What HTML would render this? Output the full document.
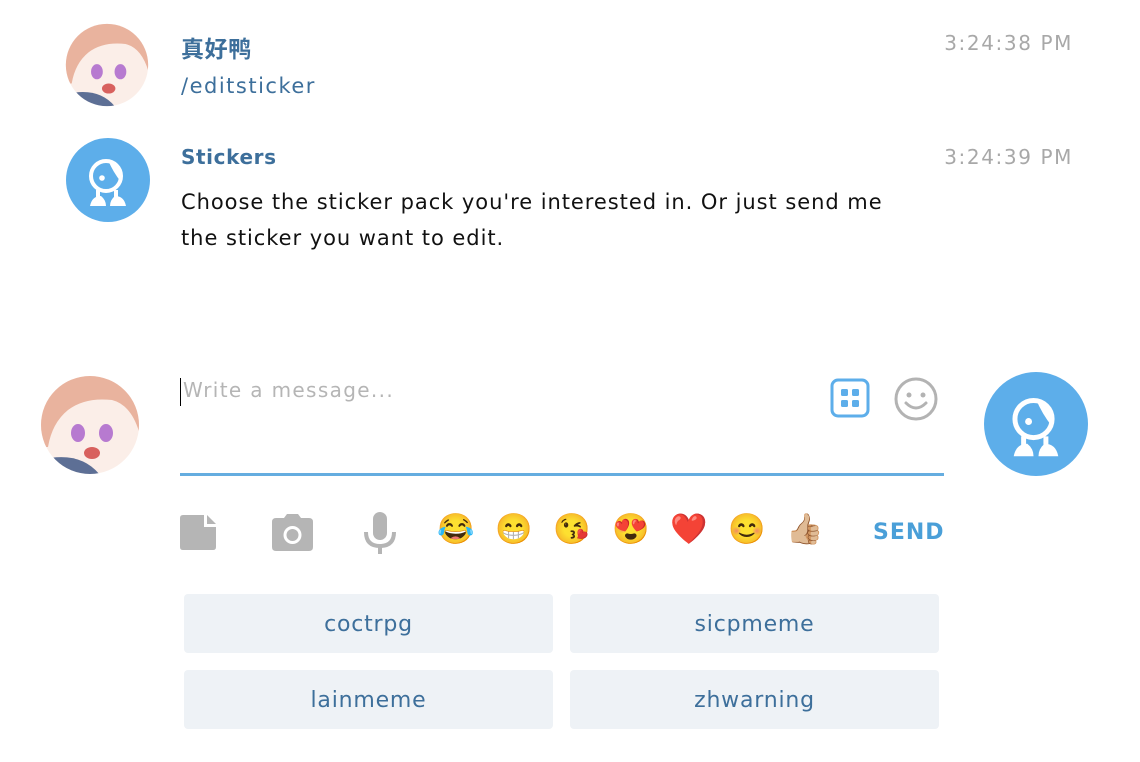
<!DOCTYPE html><html><head><meta charset="utf-8"><style>
body{margin:0;width:1140px;height:762px;background:#fff;font-family:"DejaVu Sans","Noto Sans CJK SC",sans-serif;position:relative;overflow:hidden}
.a{position:absolute}
.name{color:#3d6f9b;font-weight:bold;font-size:20px;letter-spacing:0.6px}
.time{color:#a8a8a8;font-size:20px;right:67px;letter-spacing:1.6px}
.msg{font-size:21px;color:#111;line-height:36px;letter-spacing:0.95px}
.btn{position:absolute;background:#eef2f6;border-radius:4px;color:#3d6f9b;font-size:22px;letter-spacing:0.8px;text-align:center;line-height:62px;width:369px;height:59px}
.emo{position:absolute;top:512px;font-size:30px;font-family:"Noto Color Emoji","DejaVu Sans",sans-serif}
</style></head><body>
<svg class="a" style="left:65px;top:22px" width="84" height="86" viewBox="0 0 100 100"><defs><clipPath id="c1"><circle cx="50" cy="50" r="49"/></clipPath></defs><g clip-path="url(#c1)"><rect width="100" height="100" fill="#fbeee8"/><path d="M0 0H100V60Q92 30 72 25Q45 22 28 35Q12 48 8 72L0 72Z" fill="#e9b39e"/><ellipse cx="38" cy="58" rx="7" ry="9" fill="#b77ad0"/><ellipse cx="66" cy="58" rx="7" ry="9" fill="#b77ad0"/><ellipse cx="52" cy="78" rx="8" ry="6" fill="#d8615e"/><path d="M0 85Q40 75 60 100H0Z" fill="#5d6f95"/></g></svg>
<div class="a name" style="left:181px;top:30px;font-size:23px">真好鸭</div>
<div class="a" style="left:181px;top:74px;font-size:21px;letter-spacing:1.5px;color:#3d6f9b">/editsticker</div>
<div class="a time" style="top:31px">3:24:38 PM</div>
<svg class="a" style="left:66px;top:138px" width="84" height="84" viewBox="0 0 84 84"><circle cx="42" cy="42" r="42" fill="#5daeea"/><circle cx="40" cy="38" r="15" fill="none" stroke="#fff" stroke-width="4"/><path d="M42 22Q58 28 55 44Q47 34 42 22Z" fill="#fff"/><circle cx="36" cy="40" r="2.8" fill="#fff"/><path d="M32 52V60M50 52V60" stroke="#fff" stroke-width="4"/><path d="M24 68Q26 58 35 58Q40 62 40 68ZM60 68Q58 58 49 58Q44 62 44 68Z" fill="#fff"/></svg>
<div class="a name" style="left:181px;top:145px">Stickers</div>
<div class="a time" style="top:145px">3:24:39 PM</div>
<div class="a msg" style="left:181px;top:184px">Choose the sticker pack you're interested in. Or just send me<br>the sticker you want to edit.</div>
<svg class="a" style="left:40px;top:375px" width="100" height="100" viewBox="0 0 100 100"><defs><clipPath id="c2"><circle cx="50" cy="50" r="49"/></clipPath></defs><g clip-path="url(#c2)"><rect width="100" height="100" fill="#fbeee8"/><path d="M0 0H100V60Q92 30 72 25Q45 22 28 35Q12 48 8 72L0 72Z" fill="#e9b39e"/><ellipse cx="38" cy="58" rx="7" ry="9" fill="#b77ad0"/><ellipse cx="66" cy="58" rx="7" ry="9" fill="#b77ad0"/><ellipse cx="52" cy="78" rx="8" ry="6" fill="#d8615e"/><path d="M0 85Q40 75 60 100H0Z" fill="#5d6f95"/></g></svg>
<div class="a" style="left:180px;top:378px;width:1px;height:28px;background:#000"></div>
<div class="a" style="left:183px;top:378px;font-size:20px;letter-spacing:1.35px;color:#b5b5b5">Write a message...</div>
<svg class="a" style="left:830px;top:378px" width="40" height="40" viewBox="0 0 40 40"><rect x="2" y="2" width="36" height="36" rx="6" fill="none" stroke="#5daeea" stroke-width="3"/><rect x="11" y="11" width="7" height="7" rx="1.5" fill="#5daeea"/><rect x="22" y="11" width="7" height="7" rx="1.5" fill="#5daeea"/><rect x="11" y="22" width="7" height="7" rx="1.5" fill="#5daeea"/><rect x="22" y="22" width="7" height="7" rx="1.5" fill="#5daeea"/></svg>
<svg class="a" style="left:893px;top:376px" width="46" height="46" viewBox="0 0 46 46"><circle cx="23" cy="23" r="20" fill="none" stroke="#b3b3b3" stroke-width="3"/><circle cx="16" cy="19" r="2.5" fill="#b3b3b3"/><circle cx="30" cy="19" r="2.5" fill="#b3b3b3"/><path d="M13 27Q23 37 33 27" fill="none" stroke="#b3b3b3" stroke-width="3" stroke-linecap="round"/></svg>
<svg class="a" style="left:984px;top:372px" width="104" height="104" viewBox="0 0 84 84"><circle cx="42" cy="42" r="42" fill="#5daeea"/><circle cx="40" cy="38" r="15" fill="none" stroke="#fff" stroke-width="4"/><path d="M42 22Q58 28 55 44Q47 34 42 22Z" fill="#fff"/><circle cx="36" cy="40" r="2.8" fill="#fff"/><path d="M32 52V60M50 52V60" stroke="#fff" stroke-width="4"/><path d="M24 68Q26 58 35 58Q40 62 40 68ZM60 68Q58 58 49 58Q44 62 44 68Z" fill="#fff"/></svg>
<div class="a" style="left:180px;top:473px;width:764px;height:3px;background:#65ade0"></div>
<svg class="a" style="left:180px;top:515px" width="37" height="35" viewBox="0 0 37 35"><path d="M3 0H24V12H36V32Q36 35 33 35H3Q0 35 0 32V3Q0 0 3 0Z" fill="#b5b5b5"/><path d="M27 0L36 9H27Z" fill="#b5b5b5"/></svg>
<svg class="a" style="left:272px;top:514px" width="41" height="37" viewBox="0 0 41 37"><path d="M12 4L15 0H26L29 4H37Q41 4 41 8V33Q41 37 37 37H4Q0 37 0 33V8Q0 4 4 4Z" fill="#b5b5b5"/><circle cx="20.5" cy="21" r="9" fill="#fff"/><circle cx="20.5" cy="21" r="6" fill="#b5b5b5"/></svg>
<svg class="a" style="left:362px;top:512px" width="36" height="42" viewBox="0 0 36 42"><rect x="11" y="0" width="14" height="28" rx="7" fill="#b5b5b5"/><path d="M4 20Q4 34 18 34Q32 34 32 20" fill="none" stroke="#b5b5b5" stroke-width="4"/><rect x="16" y="33" width="4" height="9" fill="#b5b5b5"/></svg>
<div class="emo" style="left:437px">😂</div><div class="emo" style="left:495px">😁</div><div class="emo" style="left:553px">😘</div><div class="emo" style="left:612px">😍</div><div class="emo" style="left:670px">❤️</div><div class="emo" style="left:728px">😊</div><div class="emo" style="left:786px">👍🏼</div>
<div class="a" style="left:873px;top:520px;font-size:22px;letter-spacing:1px;font-weight:bold;color:#4a9fd8">SEND</div>
<div class="btn" style="left:184px;top:594px">coctrpg</div>
<div class="btn" style="left:570px;top:594px">sicpmeme</div>
<div class="btn" style="left:184px;top:670px">lainmeme</div>
<div class="btn" style="left:570px;top:670px">zhwarning</div>
</body></html>
